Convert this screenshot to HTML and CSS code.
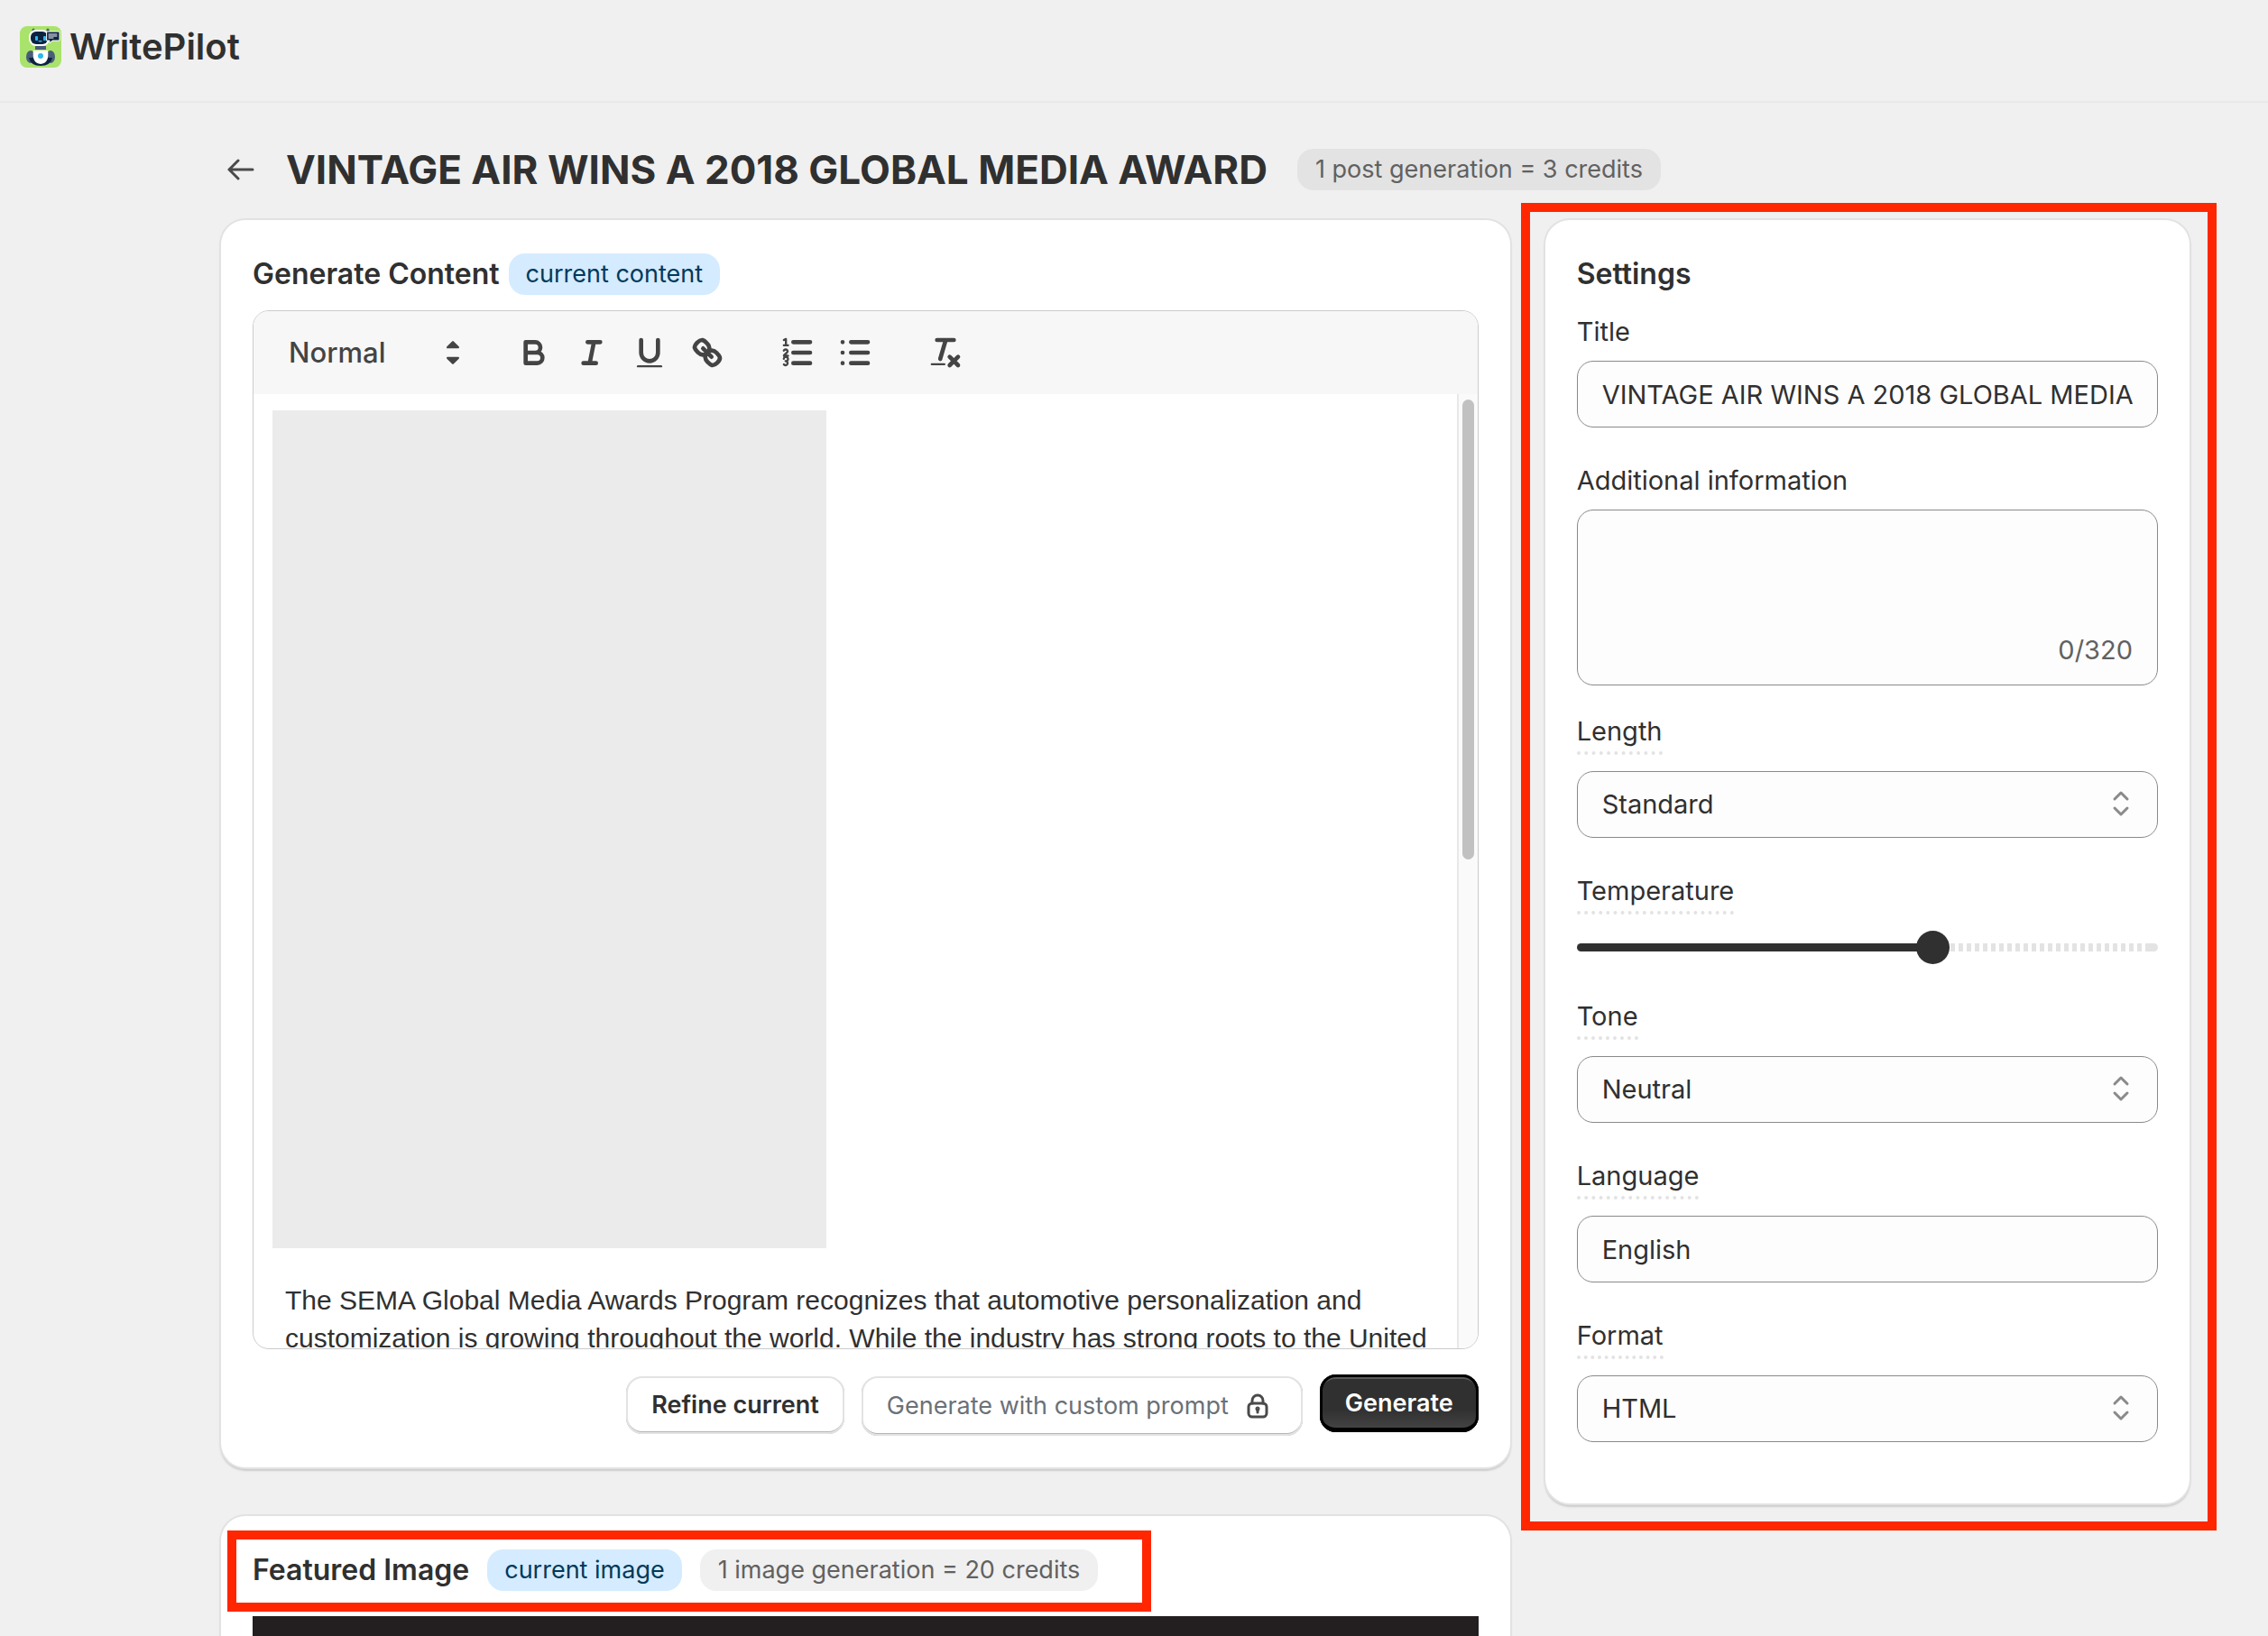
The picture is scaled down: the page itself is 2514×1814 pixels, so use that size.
FILE: index.html
```html
<!DOCTYPE html>
<html lang="en">
<head>
	<meta charset="UTF-8" />
	<meta name="viewport" content="width=device-width, initial-scale=1.0" />
	<title>WritePilot</title>
	<link rel="stylesheet" href="styles.css">
</head>
<body>
	<header class="topbar">
		<svg class="logo" viewBox="0 0 46 46" aria-hidden="true">
			<rect width="46" height="46" rx="8" fill="#a9e36b" />
			<path d="M15 4v4M31 4v4" stroke="#4a5d78" stroke-width="3" stroke-linecap="round" />
			<ellipse cx="12" cy="34" rx="5" ry="7" fill="#4a5d78" />
			<ellipse cx="34" cy="34" rx="5" ry="7" fill="#4a5d78" />
			<path d="M10 35h26q-2 9-13 9t-13-9z" fill="#0c2340" />
			<path d="M15 27h16q2 14-8 15-10-1-8-15z" fill="#fff" />
			<rect x="17" y="22" width="12" height="4" fill="#4a5d78" />
			<rect x="10" y="4" width="23" height="18" rx="8" fill="#fff" />
			<rect x="12" y="6" width="19" height="14" rx="6" fill="#0c2340" />
			<path d="M30 6h14v10h-8l-3 3v-3h-3z" fill="#0c2340" stroke="#fff" />
			<path d="M32 9h9M32 11h9M32 13h5" stroke="#fff" />
			<rect x="17" y="11" width="3" height="5" rx="1" fill="#2cb8f0" />
			<rect x="26" y="11" width="3" height="5" rx="1" fill="#2cb8f0" />
			<path d="M20 16h5q-2 3-5 0z" fill="#2cb8f0" />
			<circle cx="23" cy="33" r="3" fill="#2cb8f0" />
		</svg>
		<span class="brand">WritePilot</span>
	</header>

	<main class="page">
		<div class="page-header">
			<a class="back" href="#" aria-label="Back">
				<svg viewBox="0 0 30 24"><path d="M12 2L2 12l10 10M2 12h26" /></svg>
			</a>
			<h1>VINTAGE AIR WINS A 2018 GLOBAL MEDIA AWARD</h1>
			<span class="badge badge-dark">1 post generation = 3 credits</span>
		</div>

		<div class="layout">
			<div class="primary">
				<section class="card">
					<div class="card-header">
						<h2>Generate Content</h2>
						<span class="badge badge-info">current content</span>
					</div>

					<div class="editor">
						<div class="toolbar">
							<button type="button" class="picker">
								Normal
								<svg viewBox="0 0 18 18"><path class="fill" d="M6.500 11.500l2.500 2.500 2.500-2.500zM6.500 6.500l2.500-2.500 2.500 2.500z" /></svg>
							</button>
							<div class="formats">
								<button type="button" aria-label="Bold">
									<svg viewBox="0 0 18 18"><path d="M5 4h4.500a2.500 2.500 0 0 1 0 5H5zM5 9h5.500a2.500 2.500 0 0 1 0 5H5z" /></svg>
								</button>
								<button type="button" aria-label="Italic">
									<svg viewBox="0 0 18 18"><path d="M7 4h6M5 14h6M8 14l2-10" /></svg>
								</button>
								<button type="button" aria-label="Underline">
									<svg viewBox="0 0 18 18"><path d="M5 3v6a4 4 0 0 0 8 0V3" /><rect class="solid" x="3" y="15" width="12" height="1" rx="0.500" /></svg>
								</button>
								<button type="button" aria-label="Link">
									<svg viewBox="0 0 18 18"><path d="M7 7l4 4M8.900 4.577a3.476 3.476 0 0 1 .360 4.679A3.476 3.476 0 0 1 4.577 8.900C3.185 7.500 2.035 6.400 4.217 4.217S7.500 3.185 8.900 4.577zM13.423 9.100a3.476 3.476 0 0 0-4.679-.360 3.476 3.476 0 0 0 .360 4.679c1.392 1.392 2.500 2.542 4.679.360s1.031-3.287-.360-4.679z" /></svg>
								</button>
							</div>
							<div class="formats">
								<button type="button" aria-label="Numbered list">
									<svg viewBox="0 0 18 18"><path d="M7 4h8M7 9h8M7 14h8" /><path class="thin" d="M2.500 5.500h2M3.500 5.500v-3l-1 .500M4.500 10.500h-2c0-.800 1.850-1.200 1.850-2.200a1 1 0 0 0-1.850-.300M2.500 14.600a1 1 0 1 0 .800-1.600 1 1 0 1 0-.800-1.100" /></svg>
								</button>
								<button type="button" aria-label="Bulleted list">
									<svg viewBox="0 0 18 18"><path d="M7 4h8M7 9h8M7 14h8M3 4h0M3 9h0M3 14h0" /></svg>
								</button>
							</div>
							<div class="formats">
								<button type="button" aria-label="Clear formatting">
									<svg viewBox="0 0 18 18"><path d="M5 3h8M6.500 12L9 3.500M11 11l4 4M15 11l-4 4" /><rect class="solid" x="2" y="14" width="7" height="1" rx="0.500" /></svg>
								</button>
							</div>
						</div>
						<div class="editor-body">
							<div class="document">
								<div class="image-placeholder"></div>
								<p>The SEMA Global Media Awards Program recognizes that automotive personalization and customization is growing throughout the world. While the industry has strong roots to the United</p>
							</div>
							<div class="scroll-track"><div class="scroll-thumb"></div></div>
						</div>
					</div>

					<div class="actions">
						<button type="button" class="btn">Refine current</button>
						<button type="button" class="btn btn-locked">
							Generate with custom prompt
							<svg viewBox="0 0 24 28"><rect x="2" y="11" width="20" height="15" rx="4" /><path d="M6 11V8a6 6 0 0 1 12 0v3M12 18v3" /><circle cx="12" cy="17" r="1" /></svg>
						</button>
						<button type="button" class="btn btn-primary">Generate</button>
					</div>
				</section>

				<section class="card">
					<div class="card-header featured marked">
						<h2>Featured Image</h2>
						<span class="badge badge-info">current image</span>
						<span class="badge">1 image generation = 20 credits</span>
					</div>
					<div class="featured-image"></div>
				</section>
			</div>

			<aside class="card settings marked">
				<h2>Settings</h2>
				<div class="field">
					<label for="title">Title</label>
					<input type="text" id="title" value="VINTAGE AIR WINS A 2018 GLOBAL MEDIA AWARD" />
				</div>
				<div class="field field-info">
					<label for="info">Additional information</label>
					<textarea id="info"></textarea>
					<span class="counter">0/320</span>
				</div>
				<div class="field">
					<label class="hint" for="length">Length</label>
					<div class="select">
						<select id="length"><option>Standard</option></select>
						<svg viewBox="0 0 20 32"><path d="M3 11l7-7 7 7M3 21l7 7 7-7" /></svg>
					</div>
				</div>
				<div class="field">
					<label class="hint" for="temperature">Temperature</label>
					<input type="range" id="temperature" min="0" max="100" value="62" />
				</div>
				<div class="field">
					<label class="hint" for="tone">Tone</label>
					<div class="select">
						<select id="tone"><option>Neutral</option></select>
						<svg viewBox="0 0 20 32"><path d="M3 11l7-7 7 7M3 21l7 7 7-7" /></svg>
					</div>
				</div>
				<div class="field">
					<label class="hint" for="language">Language</label>
					<input type="text" id="language" value="English" />
				</div>
				<div class="field">
					<label class="hint" for="format">Format</label>
					<div class="select">
						<select id="format"><option>HTML</option></select>
						<svg viewBox="0 0 20 32"><path d="M3 11l7-7 7 7M3 21l7 7 7-7" /></svg>
					</div>
				</div>
			</aside>
		</div>
	</main>
</body>
</html>
```
FILE: styles.css
```css
* {
	box-sizing: border-box;
}

body {
	margin: 0;
	height: 100vh;
	overflow: hidden;
	background: #f0f0f0;
	color: #303030;
	font-family: Inter, "Liberation Sans", sans-serif;
	font-size: 29px;
	line-height: 46px;
}

h1, h2, p {
	margin: 0;
}

button, input, select, textarea {
	font: inherit;
	color: inherit;
}

svg {
	fill: none;
	stroke-linecap: round;
	stroke-linejoin: round;
	flex: none;
}

.topbar {
	display: flex;
	align-items: center;
	gap: 9px;
	height: 114px;
	padding: 0 22px 8px;
	border-bottom: 2px solid #e9e9e9;
}

.logo {
	width: 46px;
	height: 46px;
}

.brand {
	font-size: 40px;
	font-weight: 600;
}

.page {
	padding: 46px 87px 0 245px;
}

.page-header {
	display: flex;
	align-items: center;
	height: 56px;
	margin-bottom: 28px;
}

.back {
	display: flex;
	width: 30px;
	margin: 0 35px 0 7px;
}

.back svg {
	width: 30px;
	height: 24px;
	stroke: #4a4a4a;
	stroke-width: 3;
}

h1 {
	margin-right: 33px;
	font-size: 44px;
	font-weight: 700;
	white-space: nowrap;
}

h2 {
	font-size: 32px;
	line-height: 46px;
	font-weight: 600;
}

.badge {
	padding: 0 20px;
	border-radius: 18px;
	background: #f0f0f0;
	color: #616161;
	font-size: 27px;
	line-height: 46px;
	white-space: nowrap;
}

.badge-dark {
	background: #e3e3e3;
}

.badge-info {
	padding: 0 19px;
	background: #d5ebff;
	color: #003a5a;
}

.layout {
	display: grid;
	grid-template-columns: 2fr 1fr;
	gap: 39px;
	align-items: start;
}

.primary {
	display: grid;
	gap: 54px;
	min-width: 0;
}

.card {
	min-width: 0;
	padding: 37px 35px;
	border-radius: 27px;
	background: #fff;
	box-shadow: 0 0 0 2px #e2e2e2, 0 3px 2px 1px #cccccc;
}

.card-header {
	display: flex;
	align-items: center;
	gap: 10px;
	margin-bottom: 17px;
}

/* Red highlight drawn around a block */
.marked {
	position: relative;
}

.marked::after {
	content: "";
	position: absolute;
	inset: -19px -30px -30px -27px;
	border: 10px solid #ff2600;
	pointer-events: none;
}

.featured {
	width: fit-content;
	gap: 20px;
	margin-bottom: 28px;
}

.featured::after {
	inset: -21px -59px -23px -28px;
}

.featured-image {
	height: 640px;
	background: #231f20;
}

.editor {
	overflow: hidden;
	border: 1px solid #cccccc;
	border-radius: 18px;
}

.toolbar {
	display: flex;
	align-items: center;
	gap: 36px;
	height: 92px;
	padding: 0 22px;
	background: #f7f7f7;
	color: #444;
}

.toolbar button {
	display: flex;
	align-items: center;
	justify-content: center;
	width: 64px;
	padding: 0;
	border: 0;
	background: none;
}

.toolbar .picker {
	justify-content: space-between;
	width: 221px;
	padding: 0 1px 0 17px;
	font-size: 31px;
	font-weight: 500;
}

.toolbar svg {
	width: 42px;
	height: 42px;
	stroke: #444;
	stroke-width: 2;
}

.toolbar .fill {
	fill: #444;
	stroke-width: 1;
}

.toolbar .thin {
	stroke-width: 1;
}

.toolbar .solid {
	fill: #444;
	stroke: none;
}

.formats {
	display: flex;
}

.editor-body {
	display: flex;
	height: 1058px;
}

.document {
	flex: 1;
	min-width: 0;
	padding: 18px 21px 0;
	overflow: hidden;
}

.document p {
	padding: 37px 0 0 14px;
	font-family: "Liberation Sans", sans-serif;
	font-size: 30px;
	line-height: 42px;
}

.image-placeholder {
	width: 614px;
	height: 929px;
	background: #ebebeb;
}

.scroll-track {
	width: 23px;
	padding: 6px 4px;
	border-left: 2px solid #e8e8e8;
	background: #fafafa;
}

.scroll-thumb {
	width: 13px;
	height: 510px;
	border-radius: 7px;
	background: #c1c1c1;
}

.actions {
	display: flex;
	justify-content: flex-end;
	align-items: flex-start;
	gap: 19px;
	padding-top: 28px;
	margin-bottom: -2px;
}

.btn {
	display: flex;
	align-items: center;
	gap: 20px;
	height: 64px;
	margin-top: 2px;
	padding: 0 28px;
	border: 0;
	border-radius: 18px;
	background: #fff;
	box-shadow: inset 0 0 0 2px #e3e3e3, inset 0 -2px 0 1px #b5b5b5;
	font-size: 27px;
	font-weight: 600;
}

.btn-locked {
	height: 66px;
	padding-right: 38px;
	color: #6b7177;
	font-weight: 400;
}

.btn-locked svg {
	width: 24px;
	height: 28px;
	stroke: #4a4a4a;
	stroke-width: 3;
}

.btn-primary {
	margin-top: 0;
	background: linear-gradient(#303030 60%, #474747);
	box-shadow: inset 0 -5px 0 #000, inset 0 0 0 3px #000, inset 0 5px 0 #5a5a5a;
	color: #fff;
}

.settings {
	padding-bottom: 32px;
}

.settings h2 {
	margin-bottom: 18px;
}

.field {
	display: flex;
	flex-direction: column;
	margin-bottom: 36px;
	position: relative;
}

.field-info {
	margin-bottom: 28px;
}

label {
	align-self: flex-start;
	margin-bottom: 9px;
}

.hint {
	margin-bottom: 18px;
	border-bottom: 4px dotted #e3e3e3;
	line-height: 45px;
}

input[type="text"], select, textarea {
	width: 100%;
	height: 74px;
	padding: 0 27px;
	border: 1px solid #8a8a8a;
	border-radius: 18px;
	background: #fdfdfd;
}

textarea {
	display: block;
	height: 195px;
	padding: 14px 27px;
	resize: none;
}

.counter {
	position: absolute;
	right: 28px;
	bottom: 16px;
	color: #616161;
}

.select {
	position: relative;
}

select {
	display: block;
	appearance: none;
}

.select svg {
	position: absolute;
	top: 20px;
	right: 31px;
	width: 20px;
	height: 32px;
	stroke: #8a8a8a;
	stroke-width: 3;
	pointer-events: none;
}

input[type="range"] {
	appearance: none;
	width: 100%;
	height: 36px;
	margin: 0;
	background: none;
}

input[type="range"]::-webkit-slider-runnable-track {
	height: 9px;
	border-radius: 5px;
	background:
		linear-gradient(#303030, #303030) left / 61% 100% no-repeat,
		linear-gradient(#e3e3e3, #e3e3e3) right / 12px 100% no-repeat,
		repeating-linear-gradient(90deg, #e3e3e3 0 5px, #fff 5px 9px);
}

input[type="range"]::-webkit-slider-thumb {
	appearance: none;
	width: 37px;
	height: 37px;
	margin-top: -14px;
	border-radius: 50%;
	background: #303030;
}
```
